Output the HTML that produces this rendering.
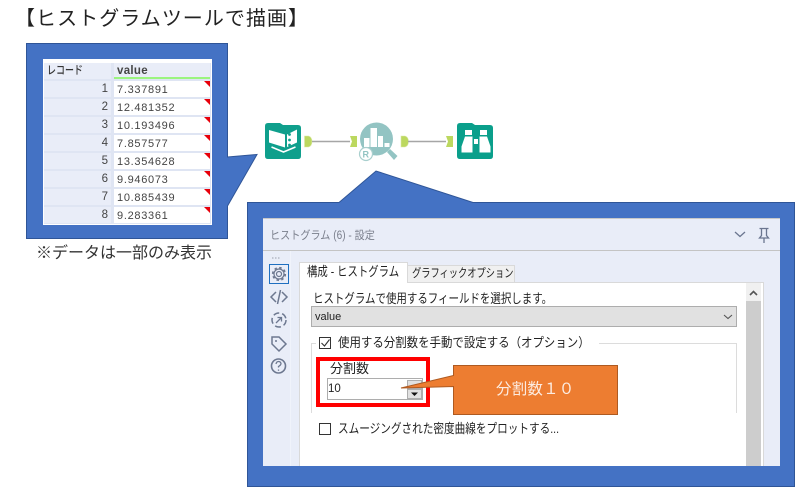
<!DOCTYPE html>
<html><head><meta charset="utf-8">
<style>
html,body{margin:0;padding:0;background:#fff}
#p{position:relative;width:795px;height:487px;overflow:hidden;background:#fff;font-family:"Liberation Sans","Noto Sans CJK JP",sans-serif;color:#222}
#p div{position:absolute;white-space:nowrap}
svg{position:absolute;left:0;top:0}
.r{background:#e9edf8;left:44px;width:67px;height:16px;text-align:right;font-size:11.500px;line-height:17px;color:#444}
.r span{padding-right:3px}
.v{background:#fff;left:114px;width:96px;height:16px;font-size:11px;line-height:18px;color:#444;text-indent:3px;letter-spacing:.7px}
.t{width:0;height:0;border-top:6px solid #e8000b;border-left:6px solid transparent;left:204px}
.s{transform-origin:0 50%}
</style></head><body><div id="p">
<div style="left:15px;top:5px;font-size:20px;line-height:28px;color:#222;letter-spacing:1.050px">【ヒストグラムツールで描画】</div>

<svg width="795" height="487">
<path d="M26.500 43.500H227.500V157L257 154.500 227.500 206V238.500H26.500Z" fill="#4472c4" stroke="#2f5597"/>
<path d="M247.500 202.500H339L376 171 473 202.500H794.500V486.500H247.500Z" fill="#4472c4" stroke="#2f5597"/>
</svg>

<div style="left:43px;top:59px;width:169px;height:166px;background:#dfe5f3"></div>
<div style="left:43px;top:59px;width:169px;height:4px;background:#fff"></div>
<div style="left:43px;top:59px;width:1px;height:166px;background:#fff"></div>
<div style="left:211px;top:59px;width:1px;height:166px;background:#fff"></div>
<div style="left:43px;top:224px;width:169px;height:1px;background:#fff"></div>
<div style="left:44px;top:63px;width:67px;height:16px;background:#e9edf8"></div>
<div class="s" style="left:47px;top:63px;color:#333;font-size:11.500px;line-height:16px;transform:scaleX(.78);font-weight:500">レコード</div>
<div class="r" style="left:114px;width:96px;top:63px;height:14px;text-align:left;text-indent:3px;font-weight:bold;color:#444;font-size:11.500px;line-height:16px;letter-spacing:.3px">value</div>
<div style="left:114px;top:77px;width:96px;height:2px;background:#9bf57f"></div>

<div class="r" style="top:81px"><span>1</span></div><div class="v" style="top:81px">7.337891</div><div class="t" style="top:81px"></div>
<div class="r" style="top:99px"><span>2</span></div><div class="v" style="top:99px">12.481352</div><div class="t" style="top:99px"></div>
<div class="r" style="top:117px"><span>3</span></div><div class="v" style="top:117px">10.193496</div><div class="t" style="top:117px"></div>
<div class="r" style="top:135px"><span>4</span></div><div class="v" style="top:135px">7.857577</div><div class="t" style="top:135px"></div>
<div class="r" style="top:153px"><span>5</span></div><div class="v" style="top:153px">13.354628</div><div class="t" style="top:153px"></div>
<div class="r" style="top:171px"><span>6</span></div><div class="v" style="top:171px">9.946073</div><div class="t" style="top:171px"></div>
<div class="r" style="top:189px"><span>7</span></div><div class="v" style="top:189px">10.885439</div><div class="t" style="top:189px"></div>
<div class="r" style="top:207px"><span>8</span></div><div class="v" style="top:207px">9.283361</div><div class="t" style="top:207px"></div>

<div style="left:36px;top:243px;font-size:16px;line-height:22px;color:#333">※データは一部のみ表示</div>

<svg width="795" height="487">
<!-- input tool -->
<path d="M265 126q0-3 3-3h12l3 2h15q3 0 3 3v28q0 3-3 3h-30q-3 0-3-3Z" fill="#0f9f8c"/>
<path d="M269 130l16 4.500v13l-16-5Z M287 134.500l10-5v13l-10 4.500Z" fill="#fff"/>
<path d="M271.500 147l12 5 12-5" fill="none" stroke="#fff" stroke-width="1.500"/>
<circle cx="289.500" cy="134.500" r="1.400" fill="#0f9f8c"/><circle cx="289.500" cy="140" r="1.400" fill="#0f9f8c"/><circle cx="289.500" cy="145" r="1.400" fill="#0f9f8c"/>
<!-- connectors -->
<path d="M304.500 136h4q3.500 1 3.500 5.500t-3.500 5.500h-4Z" fill="#bcd85f" stroke="#dbe9a8" stroke-width=".6"/>
<path d="M312 141.500h38" stroke="#a6a6a6" stroke-width="1.500"/>
<path d="M350 136h7v11h-7l2-5.500Z" fill="#bcd85f"/>
<path d="M401 136h4q3.500 1 3.500 5.500t-3.500 5.500h-4Z" fill="#bcd85f" stroke="#dbe9a8" stroke-width=".6"/>
<path d="M408 141.500h38" stroke="#a6a6a6" stroke-width="1.500"/>
<path d="M446 136h7v11h-7l2-5.500Z" fill="#bcd85f"/>
<!-- histogram tool -->
<circle cx="376.500" cy="139" r="16.500" fill="#93c4c3"/>
<path d="M387 152l3-3 7.500 7-3.500 4Z" fill="#93c4c3"/>
<path d="M364 147v-9h5.500v9ZM370.500 147v-19h6.500v19ZM378 147v-11h5v11ZM384.500 147v-4h5v4Z" fill="#fff"/>
<circle cx="366" cy="154" r="6.500" fill="#fff" stroke="#a9cfce" stroke-width="1.200"/>
<text x="362.500" y="157.500" font-size="9" font-weight="bold" fill="#93c4c3" font-family="Liberation Sans">R</text>
<!-- browse tool -->
<path d="M457 126q0-3 3-3h12l3 2h15q3 0 3 3v28q0 3-3 3h-30q-3 0-3-3Z" fill="#0a9f8b"/>
<path d="M465 130h7v5h-7ZM480 130h7v5h-7ZM465 136.500h7.500v16h-11v-6ZM479.500 136.500h7.500l3.500 10v6h-11ZM474 139h4v5h-4Z" fill="#fff"/>
</svg>

<!-- settings panel -->
<div style="left:263px;top:218px;width:517px;height:248px;background:#e9edf8"></div>
<div style="left:263px;top:218px;width:517px;height:1px;background:#c8c8c8"></div>
<div style="left:263px;top:250px;width:517px;height:1px;background:#c4c4c4"></div>
<div style="left:290px;top:251px;width:1px;height:215px;background:#f0f3fb"></div>
<div class="s" style="left:270px;top:227px;font-size:11.500px;line-height:18px;color:#7a7f8c;transform:scaleX(.88)">ヒストグラム (6) - 設定</div>
<svg width="795" height="487" fill="none">
<path d="M735 232l5 4.500 5-4.500" stroke="#6b7690" stroke-width="1.300"/>
<path d="M759.500 228.500h9M761.500 228.500v7l-2 2.500h9l-2-2.500v-7M764 238v5" stroke="#6b7690" stroke-width="1.300"/>
<path d="M272 258h1.500M275 258h1.500M278 258h1.500" stroke="#9aa0ad"/>
<rect x="269.500" y="264.500" width="19" height="19" stroke="#1f6fc0" fill="#e9edf8"/>
<circle cx="279" cy="274" r="2.500" stroke="#6d7890" stroke-width="1.200"/>
<circle cx="279" cy="274" r="5" stroke="#6d7890" stroke-width="1.200"/>
<circle cx="279" cy="274" r="6.300" stroke="#6d7890" stroke-width="1.600" stroke-dasharray="2.500 2.450"/>
<path d="M276 292l-5 5 5 5M282 292l5 5-5 5M280.500 290l-3 14" stroke="#6d7890" stroke-width="1.500"/>
<circle cx="279" cy="320" r="7" stroke="#6d7890" stroke-width="1.500" stroke-dasharray="6 3"/>
<path d="M276 323l5-5M277.500 317.500h4v4" stroke="#6d7890" stroke-width="1.300"/>
<path d="M272 337h7l7 7-7 7-7-7Z" stroke="#6d7890" stroke-width="1.500"/>
<circle cx="276" cy="341" r="1" fill="#6d7890"/>
<circle cx="278.500" cy="366" r="7" stroke="#6d7890" stroke-width="1.600"/>
<path d="M276 364q.5-2.500 2.500-2.500t2.500 2q0 1.500-2.500 3v1" stroke="#6d7890" stroke-width="1.300"/>
<path d="M278.500 369.500v1.300" stroke="#6d7890" stroke-width="1.300"/>
</svg>

<!-- tabs -->
<div style="left:299px;top:282px;width:464px;height:184px;background:#fff;border-top:1px solid #d9d9d9;box-sizing:border-box"></div>
<div style="left:763px;top:282px;width:1px;height:184px;background:#d9d9d9"></div>
<div style="left:299px;top:282px;width:1px;height:184px;background:#d9d9d9"></div>
<div style="left:407px;top:265px;width:108px;height:17px;background:#f0f0f0;border:1px solid #d9d9d9;border-bottom:0;box-sizing:border-box"></div>
<div class="s" style="left:412px;top:265px;font-size:12px;line-height:17px;color:#222;transform:scaleX(.77)">グラフィックオプション</div>
<div style="left:299px;top:262px;width:108.500px;height:21px;background:#fff;border:1px solid #d9d9d9;border-bottom:0;box-sizing:border-box"></div>
<div class="s" style="left:307px;top:263px;font-size:13px;line-height:18px;color:#222;transform:scaleX(.8)">構成 - ヒストグラム</div>

<div class="s" style="left:313px;top:290px;font-size:13px;line-height:18px;color:#222;transform:scaleX(.805)">ヒストグラムで使用するフィールドを選択します。</div>
<div style="left:311px;top:306px;width:426px;height:21px;box-sizing:border-box;background:#e1e1e1;border:1px solid #adadad;font-size:11px;line-height:20px;text-indent:3px;color:#222">value</div>
<svg width="795" height="487" fill="none"><path d="M724 315l4 3.500 4-3.500" stroke="#555" stroke-width="1.100"/></svg>

<!-- scrollbar -->
<div style="left:746px;top:283px;width:15px;height:183px;background:#f0f0f0"></div>
<div style="left:746px;top:301px;width:15px;height:165px;background:#cdcdcd"></div>
<svg width="795" height="487" fill="none"><path d="M750 295l3.500-3.500 3.500 3.500" stroke="#555" stroke-width="1.600"/></svg>

<!-- group box -->
<div style="left:311px;top:343px;width:426px;height:70px;box-sizing:border-box;border:1px solid #dcdcdc;border-bottom:0"></div>
<div style="left:316px;top:334px;width:283px;height:18px;background:#fff"></div>
<svg width="795" height="487" fill="none"><rect x="319.500" y="337.500" width="11" height="11" fill="#fff" stroke="#333"/><path d="M321.500 343l3 3 5-6.500" stroke="#333" stroke-width="1.100"/></svg>
<div class="s" style="left:338px;top:334px;font-size:13px;line-height:18px;color:#222;transform:scaleX(.88)">使用する分割数を手動で設定する（オプション）</div>

<!-- red box -->
<div style="left:316px;top:357px;width:114px;height:50px;box-sizing:border-box;border:4px solid #ff0000;background:#fff"></div>
<div style="left:330px;top:360px;font-size:13px;line-height:17px;color:#222">分割数</div>
<div style="left:327px;top:378px;width:96px;height:22px;box-sizing:border-box;background:#fff;border:1px solid #adadad;font-size:11.500px;line-height:20px;color:#222">10</div>
<div style="left:407px;top:380px;width:15px;height:9px;background:#e1e1e1;border:1px solid #adadad;box-sizing:border-box"></div>
<div style="left:407px;top:389px;width:15px;height:10px;background:#e1e1e1;border:1px solid #adadad;box-sizing:border-box"></div>
<svg width="795" height="487"><path d="M411 392.500h7l-3.500 3.500Z" fill="#111"/></svg>

<!-- orange callout -->
<svg width="795" height="487"><path d="M453.500 365.500H617.500V414.500H453.500V386.500L401 388 453.500 375.500Z" fill="#ed7d31" stroke="#ae5a21"/></svg>
<div style="left:496px;top:380px;font-size:15.500px;line-height:20px;color:#fff;letter-spacing:.2px;opacity:.85">分割数１０</div>

<!-- smoothing -->
<svg width="795" height="487" fill="none"><rect x="319.500" y="423.500" width="11" height="11" fill="#fff" stroke="#333"/></svg>
<div class="s" style="left:338px;top:420px;font-size:13px;line-height:18px;color:#222;transform:scaleX(.817)">スムージングされた密度曲線をプロットする...</div>
</div></body></html>
